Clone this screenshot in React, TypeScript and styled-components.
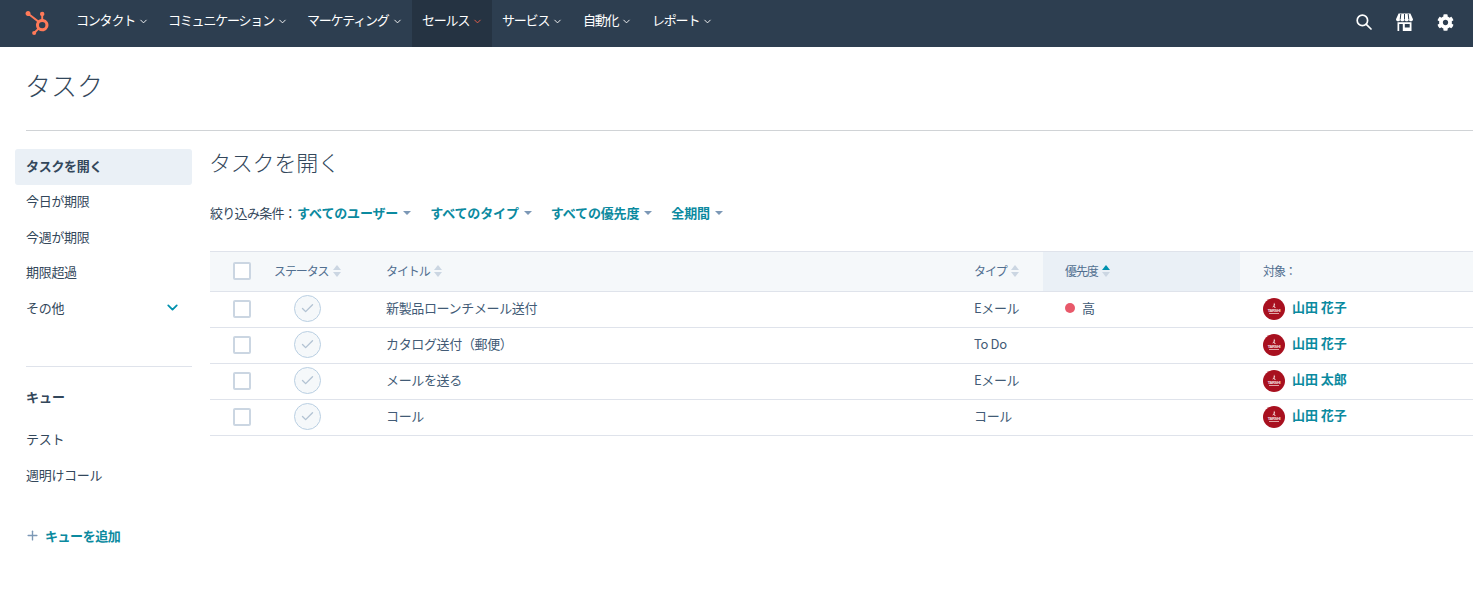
import React from "react"
import styled, { createGlobalStyle } from "styled-components"
import { ChevronDown, Plus, Check } from "lucide-react"
import { SiHubspot } from "react-icons/si"
import { FaCog } from "react-icons/fa"

const GlobalStyle = createGlobalStyle`
  html, body { margin: 0; padding: 0; background: #fff; }
  body {
    font-family: "Noto Sans CJK JP", "Noto Sans", sans-serif;
    color: #33475b;
    overflow: hidden;
  }
`

const Page = styled.div`
  width: 1473px;
  height: 591px;
  overflow: hidden;
`

const TopBar = styled.header`
  height: 47px;
  background: #2d3e50;
  display: flex;
  align-items: stretch;
  padding-left: 25px;
`

const Logo = styled.div`
  width: 26px;
  color: #ff7a59;
  display: flex;
  align-items: center;
  margin-right: 15px;
  font-size: 24px;
  padding-bottom: 2px;
`

const NavList = styled.nav`
  display: flex;
  flex: 1;
`

const NavItem = styled.div<{ $active?: boolean; $w: number }>`
  width: ${(p) => p.$w}px;
  padding: 0 0 9px 10px;
  box-sizing: border-box;
  background: ${(p) => (p.$active ? "#253342" : "transparent")};
  color: #fff;
  font-size: 13px;
  letter-spacing: -1.2px;
  display: flex;
  align-items: center;
  gap: 3px;
  svg { color: ${(p) => (p.$active ? "#f0604a" : "#fff")}; margin-top: 4px; }
`

const NavIcons = styled.div`
  display: flex;
  align-items: center;
  gap: 24px;
  padding: 0 19px 3px 0;
  color: #fff;
`

const TitleBar = styled.div`
  margin-left: 26px;
  height: 84px;
  border-bottom: 1px solid #d0d3d6;
  box-sizing: border-box;
  padding-top: 20px;
`

const PageTitle = styled.h1`
  margin: 0 0 0 -1px;
  font-size: 26px;
  line-height: 36px;
  font-weight: 300;
  color: #33475b;
`

const Body = styled.div`
  display: flex;
  padding-left: 15px;
`

const Side = styled.aside`
  width: 177px;
  padding-top: 18px;
  margin-right: 18px;
  font-size: 13px;
  flex-shrink: 0;
`

const SideItem = styled.div<{ $active?: boolean }>`
  height: 35.5px;
  padding: 0 11px 3px;
  box-sizing: border-box;
  display: flex;
  align-items: center;
  justify-content: space-between;
  border-radius: 3px;
  letter-spacing: -0.3px;
  background: ${(p) => (p.$active ? "#eaf0f6" : "transparent")};
  font-weight: ${(p) => (p.$active ? 700 : 400)};
  color: #33475b;
  svg { color: #0091ae; margin-right: 0; }
`

const SideRule = styled.div`
  height: 1px;
  background: #dfe3eb;
  margin: 39px 0 12px 11px;
`

const SideHeading = styled.div`
  font-weight: 700;
  padding-left: 11px;
  height: 36px;
  display: flex;
  align-items: center;
  margin-bottom: 8px;
  font-size: 13px;
`

const AddQueue = styled.div`
  margin-top: 24px;
  padding-left: 11px;
  display: flex;
  align-items: center;
  gap: 5px;
  height: 36px;
  color: #0b8a9f;
  font-weight: 700;
  letter-spacing: -0.45px;
  margin-left: -1px;
  svg { color: #7c98b6; }
`

const Main = styled.main`
  flex: 1;
  min-width: 0;
`

const SectionTitle = styled.h2`
  margin: 0 0 0 -1px;
  padding-top: 14px;
  height: 66px;
  box-sizing: border-box;
  font-size: 22px;
  line-height: 32px;
  font-weight: 300;
  letter-spacing: -0.2px;
`

const Filters = styled.div`
  display: flex;
  align-items: center;
  height: 34px;
  box-sizing: border-box;
  padding-bottom: 4px;
  font-size: 13px;
  letter-spacing: -0.7px;
  margin-bottom: 20px;
`

const FilterLabel = styled.span`
  margin-right: 1px;
`

const FilterLink = styled.span<{ $gap: number }>`
  color: #0b8a9f;
  font-weight: 700;
  display: inline-flex;
  align-items: center;
  letter-spacing: -0.15px;
  margin-right: ${(p) => p.$gap}px;
  &::after {
    content: "";
    margin-left: 5px;
    border: 4px solid transparent;
    border-top: 4px solid #7c98b6;
    border-bottom: 0;
    margin-top: 1px;
  }
`

const columns = "64px 112px 588px 69px 197px 1fr"

const HeadRow = styled.div`
  display: grid;
  grid-template-columns: ${columns};
  background: #f5f8fa;
  border-top: 1px solid #dfe3eb;
  border-bottom: 1px solid #dfe3eb;
  height: 39px;
  font-size: 12px;
  letter-spacing: -1.1px;
`

const HeadCell = styled.div<{ $sorted?: boolean; $pad?: number }>`
  display: flex;
  align-items: center;
  gap: 4px;
  padding: 0 0 2px ${(p) => p.$pad ?? 0}px;
  background: ${(p) => (p.$sorted ? "#eaf0f6" : "transparent")};
  color: #516f90;
`

const Row = styled.div`
  display: grid;
  grid-template-columns: ${columns};
  height: 35px;
  border-bottom: 1px solid #dfe3eb;
  font-size: 13px;
  letter-spacing: -0.35px;
`

const Cell = styled.div<{ $pad?: number; $text?: boolean }>`
  display: flex;
  align-items: center;
  padding: 0 0 ${(p) => (p.$text ? 4 : 2)}px ${(p) => p.$pad ?? 0}px;
  color: #425b76;
`

const Box = styled.span`
  width: 18px;
  height: 18px;
  box-sizing: border-box;
  border: 2px solid #cbd6e2;
  border-radius: 2px;
  background: #fff;
`

const StatusCircle = styled.span`
  width: 27px;
  height: 27px;
  margin-left: 20px;
  box-sizing: border-box;
  border: 1px solid #b9cfe2;
  border-radius: 50%;
  background: #f5f8fa;
  display: flex;
  align-items: center;
  justify-content: center;
  color: #b3c3d3;
`

const Dot = styled.span`
  width: 10px;
  height: 10px;
  border-radius: 50%;
  background: #e8596a;
  margin-right: 7px;
`

const Owner = styled.span`
  margin-left: 7px;
  color: #0b8a9f;
  font-weight: 700;
  letter-spacing: -0.05px;
  margin-top: -4px;
`

const SortStack = styled.span`
  display: inline-flex;
  flex-direction: column;
  gap: 2px;
`

const SortArrow = styled.span<{ $up?: boolean; $on?: boolean }>`
  width: 0;
  height: 0;
  border-left: 4px solid transparent;
  border-right: 4px solid transparent;
  ${(p) => (p.$up ? "border-bottom" : "border-top")}: 5px solid ${(p) => (p.$on ? "#0091ae" : "#cbd6e2")};
`

function Sort({ on }: { on?: boolean }) {
  return (
    <SortStack>
      <SortArrow $up $on={on} />
      <SortArrow />
    </SortStack>
  )
}

function SearchIcon() {
  return (
    <svg width="16" height="16" viewBox="0 0 16 16" fill="none" stroke="#fff" strokeWidth="1.7" strokeLinecap="round">
      <circle cx="6.4" cy="6.4" r="5.200" />
      <path d="M10.300 10.300 15 15" />
    </svg>
  )
}

function StoreIcon() {
  return (
    <svg width="17" height="18" viewBox="0 0 17 18" fill="#fff">
      <path d="M2.600 0.500h11.800L17 6.200c0 1.300-1 2.100-2.100 2.100-.9 0-1.700-.5-2.100-1.300-.4.8-1.300 1.300-2.200 1.300S8.900 7.800 8.500 7c-.4.8-1.200 1.300-2.100 1.300S4.600 7.800 4.200 7c-.4.8-1.200 1.300-2.100 1.300C1 8.300 0 7.500 0 6.200z" />
      <path d="M4.800 1 4.200 6.500M8.500 1v5.500M12.200 1l.6 5.500" stroke="#2d3e50" strokeWidth="1" />
      <path fillRule="evenodd" d="M1.500 9.300h14V18h-14zM3.200 11v7h3.600v-7zM8.800 11v3.600h4.900V11z" />
    </svg>
  )
}

function Avatar() {
  return (
    <svg width="22" height="22" viewBox="0 0 22 22">
      <circle cx="11" cy="11" r="11" fill="#a8101f" />
      <path d="M11 4.500l1.200 2.600-1 1 1.800 1.600h-1.500l-1-1-1.500 1H9l1.500-2z" fill="#f3d9d9" />
      <text x="11" y="13.500" textAnchor="middle" fontSize="4" fontWeight="700" fill="#f6e3e3" fontFamily="Liberation Sans, sans-serif">TARSHI</text>
      <rect x="6" y="15" width="10" height="1" fill="#e0a5a5" />
    </svg>
  )
}

const nav = [
  { label: "コンタクト", w: 92 },
  { label: "コミュニケーション", w: 139 },
  { label: "マーケティング", w: 115 },
  { label: "セールス", w: 80, active: true },
  { label: "サービス", w: 81 },
  { label: "自動化", w: 69 },
  { label: "レポート", w: 80 },
]

const tasks = [
  { title: "新製品ローンチメール送付", type: "Eメール", high: true, owner: "山田 花子" },
  { title: "カタログ送付（郵便）", type: "To Do", owner: "山田 花子" },
  { title: "メールを送る", type: "Eメール", owner: "山田 太郎" },
  { title: "コール", type: "コール", owner: "山田 花子" },
]

export default function App() {
  return (
    <Page>
      <GlobalStyle />
      <TopBar>
        <Logo>
          <SiHubspot />
        </Logo>
        <NavList>
          {nav.map((n) => (
            <NavItem key={n.label} $active={n.active} $w={n.w}>
              {n.label}
              <ChevronDown size={11} strokeWidth={2} />
            </NavItem>
          ))}
        </NavList>
        <NavIcons>
          <SearchIcon />
          <StoreIcon />
          <FaCog size={17} />
        </NavIcons>
      </TopBar>
      <TitleBar>
        <PageTitle>タスク</PageTitle>
      </TitleBar>
      <Body>
        <Side>
          <SideItem $active>タスクを開く</SideItem>
          <SideItem>今日が期限</SideItem>
          <SideItem>今週が期限</SideItem>
          <SideItem>期限超過</SideItem>
          <SideItem>
            その他
            <ChevronDown size={17} strokeWidth={2.5} />
          </SideItem>
          <SideRule />
          <SideHeading>キュー</SideHeading>
          <SideItem>テスト</SideItem>
          <SideItem>週明けコール</SideItem>
          <AddQueue>
            <Plus size={15} strokeWidth={2.2} />
            キューを追加
          </AddQueue>
        </Side>
        <Main>
          <SectionTitle>タスクを開く</SectionTitle>
          <Filters>
            <FilterLabel>絞り込み条件：</FilterLabel>
            <FilterLink $gap={19}>すべてのユーザー</FilterLink>
            <FilterLink $gap={19}>すべてのタイプ</FilterLink>
            <FilterLink $gap={19}>すべての優先度</FilterLink>
            <FilterLink $gap={0}>全期間</FilterLink>
          </Filters>
          <HeadRow>
            <HeadCell $pad={23}>
              <Box />
            </HeadCell>
            <HeadCell>
              ステータス <Sort />
            </HeadCell>
            <HeadCell>
              タイトル <Sort />
            </HeadCell>
            <HeadCell>
              タイプ <Sort />
            </HeadCell>
            <HeadCell $sorted $pad={22}>
              優先度 <Sort on />
            </HeadCell>
            <HeadCell $pad={23}>対象：</HeadCell>
          </HeadRow>
          {tasks.map((t) => (
            <Row key={t.title}>
              <Cell $pad={23}>
                <Box />
              </Cell>
              <Cell>
                <StatusCircle>
                  <Check size={15} strokeWidth={2.2} />
                </StatusCircle>
              </Cell>
              <Cell $text>{t.title}</Cell>
              <Cell $text>{t.type}</Cell>
              <Cell $pad={22} $text>
                {t.high && (
                  <>
                    <Dot />高
                  </>
                )}
              </Cell>
              <Cell $pad={23}>
                <Avatar />
                <Owner>{t.owner}</Owner>
              </Cell>
            </Row>
          ))}
        </Main>
      </Body>
    </Page>
  )
}
